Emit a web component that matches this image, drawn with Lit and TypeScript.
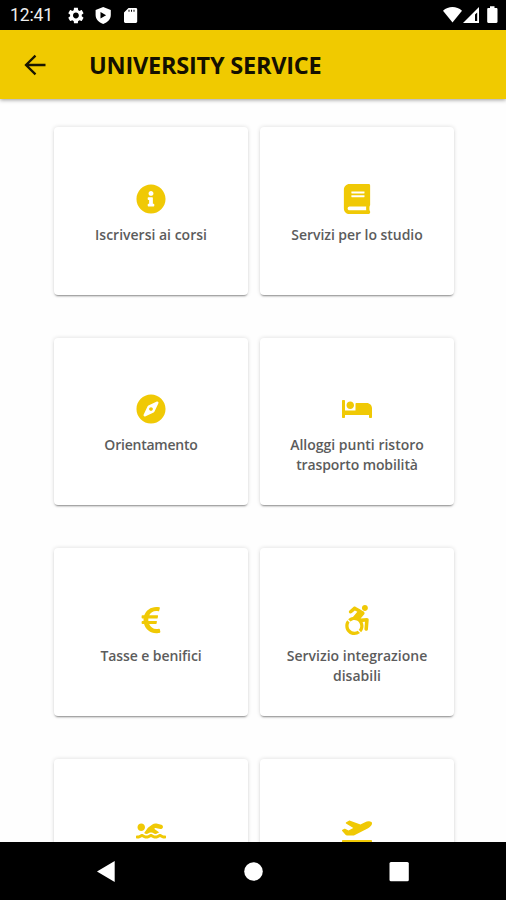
import { LitElement, html, css, svg } from "lit";
import { customElement, property } from "lit/decorators.js";
import { styleMap } from "lit/directives/style-map.js";

interface Service {
  icon: string;
  lines: { text: string; tracking: number }[];
}

const ICONS: Record<string, { width: number; path: string }> = {
  info: {
    width: 512,
    path: "M256 8C119.043 8 8 119.083 8 256c0 136.997 111.043 248 248 248s248-111.003 248-248C504 119.083 392.957 8 256 8zm0 110c23.196 0 42 18.804 42 42s-18.804 42-42 42-42-18.804-42-42 18.804-42 42-42zm56 254c0 6.627-5.373 12-12 12h-88c-6.627 0-12-5.373-12-12v-24c0-6.627 5.373-12 12-12h12v-64h-12c-6.627 0-12-5.373-12-12v-24c0-6.627 5.373-12 12-12h64c6.627 0 12 5.373 12 12v100h12c6.627 0 12 5.373 12 12v24z",
  },
  book: {
    width: 448,
    path: "M448 360V24c0-13.3-10.7-24-24-24H96C43 0 0 43 0 96v320c0 53 43 96 96 96h328c13.3 0 24-10.7 24-24v-16c0-7.5-3.5-14.3-8.9-18.7-4.2-15.4-4.2-59.3 0-74.7 5.4-4.3 8.9-11.1 8.9-18.6zM128 134c0-3.3 2.7-6 6-6h212c3.3 0 6 2.7 6 6v20c0 3.3-2.7 6-6 6H134c-3.3 0-6-2.7-6-6v-20zm0 64c0-3.3 2.7-6 6-6h212c3.3 0 6 2.7 6 6v20c0 3.3-2.7 6-6 6H134c-3.3 0-6-2.7-6-6v-20zm253.4 250H96c-17.7 0-32-14.3-32-32 0-17.6 14.4-32 32-32h285.4c-1.9 17.1-1.9 46.9 0 64z",
  },
  compass: {
    width: 496,
    path: "M225.38 233.37c-12.5 12.5-12.5 32.76 0 45.25 12.49 12.5 32.76 12.5 45.25 0 12.5-12.5 12.5-32.76 0-45.25-12.5-12.49-32.76-12.49-45.25 0zM248 8C111.03 8 0 119.03 0 256s111.03 248 248 248 248-111.03 248-248S384.97 8 248 8zm126.14 148.05L308.17 300.4a31.938 31.938 0 0 1-15.77 15.77l-144.34 65.97c-16.65 7.61-33.81-9.55-26.2-26.2l65.98-144.35a31.938 31.938 0 0 1 15.77-15.77l144.34-65.97c16.65-7.6 33.8 9.55 26.19 26.2z",
  },
  bed: {
    width: 640,
    path: "M176 256c44.11 0 80-35.89 80-80s-35.89-80-80-80-80 35.89-80 80 35.89 80 80 80zm352-128H304c-8.84 0-16 7.16-16 16v144H64V80c0-8.84-7.16-16-16-16H16C7.16 64 0 71.16 0 80v352c0 8.84 7.16 16 16 16h32c8.84 0 16-7.16 16-16v-48h512v48c0 8.84 7.16 16 16 16h32c8.84 0 16-7.16 16-16V240c0-61.86-50.14-112-112-112z",
  },
  euro: {
    width: 320,
    path: "M310.706 413.765c-1.314-6.63-7.835-10.872-14.424-9.369-10.692 2.439-27.422 5.413-45.426 5.413-56.763 0-101.929-34.79-121.461-85.449h113.689a12 12 0 0 0 11.708-9.369l6.373-28.36c1.686-7.502-4.019-14.631-11.708-14.631H115.22c-1.21-14.328-1.414-28.287.137-42.245H261.95a12 12 0 0 0 11.723-9.434l6.512-29.755c1.638-7.484-4.061-14.566-11.723-14.566H130.184c20.633-44.991 62.69-75.03 117.619-75.03 14.486 0 28.564 2.25 37.851 4.145 6.216 1.268 12.347-2.498 14.002-8.623l11.991-44.368c1.822-6.741-2.465-13.616-9.326-14.917C290.217 34.912 270.71 32 249.635 32 152.451 32 74.03 92.252 45.075 176H12c-6.627 0-12 5.373-12 12v29.755c0 6.627 5.373 12 12 12h21.569c-1.009 13.607-1.181 29.287-.181 42.245H12c-6.627 0-12 5.373-12 12v28.36c0 6.627 5.373 12 12 12h30.114C67.139 414.692 145.264 480 249.635 480c26.301 0 48.562-4.544 61.101-7.788 6.167-1.595 10.027-7.708 8.788-13.957l-8.818-44.49z",
  },
  wheelchair: {
    width: 448,
    path: "M423.9 255.8L411 413.1c-3.3 40.7-63.9 35.1-60.6-4.9l10-122.5-41.1 2.3c10.1 20.7 15.8 43.9 15.8 68.5 0 41.2-16.1 78.7-42.3 106.5l-39.3-39.3c57.9-63.7 13.1-167.2-74-167.2-25.9 0-49.5 9.9-67.2 26L73 243.2c22-20.7 50.1-35.1 81.4-40.2l75.3-85.7-42.6-24.8-51.6 46c-30 26.8-70.6-18.5-40.5-45.4l68-60.7c9.8-8.8 24.1-10.2 35.5-3.6 0 0 139.3 80.9 139.5 81.1 16.2 10.1 20.7 36 6.1 52.6L285.7 229l106.1-5.9c18.5-1.1 33.6 14.4 32.1 32.7zm-64.9-154c28.1 0 50.9-22.8 50.9-50.9C409.9 22.8 387.1 0 359 0c-28.1 0-50.9 22.8-50.9 50.9 0 28.1 22.8 50.9 50.9 50.9zM179.6 456.5c-80.6 0-127.4-90.6-82.7-156.1l-39.7-39.7C36.4 287 24 320.3 24 356.4c0 130.7 150.7 201.4 251.4 122.5l-39.7-39.7c-16 10.9-35.3 17.3-56.1 17.3z",
  },
  swimmer: {
    width: 640,
    path: "M189.61 310.58c3.54 3.26 15.27 9.42 34.39 9.42s30.86-6.16 34.39-9.42c16.02-14.77 34.5-22.58 53.46-22.58h16.3c18.96 0 37.45 7.81 53.46 22.58 3.54 3.26 15.27 9.42 34.39 9.42s30.86-6.16 34.39-9.42c14.86-13.71 31.88-21.12 49.39-22.16l-112.84-80.6 18-12.86c3.64-2.58 8.28-3.52 12.62-2.61l100.35 21.53c25.91 5.53 51.44-10.97 57-36.88 5.55-25.92-10.95-51.44-36.88-57L437.68 98.47c-30.73-6.58-63.02.12-88.56 18.38l-80.02 57.17c-10.38 7.39-19.36 16.44-26.72 26.94L173.75 299c5.47 3.23 10.82 6.93 15.86 11.58zM624 352h-16c-26.04 0-45.8-8.42-56.09-17.9-8.9-8.21-19.66-14.1-31.77-14.1h-16.3c-12.11 0-22.87 5.89-31.77 14.1C461.8 343.58 442.04 352 416 352s-45.8-8.42-56.09-17.9c-8.9-8.21-19.66-14.1-31.77-14.1h-16.3c-12.11 0-22.87 5.89-31.77 14.1C269.8 343.58 250.04 352 224 352s-45.8-8.42-56.09-17.9c-8.9-8.21-19.66-14.1-31.77-14.1h-16.3c-12.11 0-22.87 5.89-31.77 14.1C77.8 343.58 58.04 352 32 352H16c-8.84 0-16 7.16-16 16v32c0 8.84 7.16 16 16 16h16c38.62 0 72.72-12.19 96-31.84 23.28 19.66 57.38 31.84 96 31.84s72.72-12.19 96-31.84c23.28 19.66 57.38 31.84 96 31.84s72.72-12.19 96-31.84c23.28 19.66 57.38 31.84 96 31.84h16c8.84 0 16-7.16 16-16v-32c0-8.84-7.16-16-16-16zm-512-96c44.18 0 80-35.82 80-80s-35.82-80-80-80-80 35.82-80 80 35.82 80 80 80z",
  },
  plane: {
    width: 640,
    path: "M624 448H16c-8.84 0-16 7.16-16 16v32c0 8.84 7.16 16 16 16h608c8.84 0 16-7.16 16-16v-32c0-8.84-7.16-16-16-16zM80.55 341.27c6.28 6.84 15.1 10.72 24.33 10.71l130.54-.18a65.62 65.62 0 0 0 29.64-7.12l290.96-147.65c26.74-13.57 50.71-32.94 67.02-58.31 18.31-28.48 20.3-49.09 13.07-63.65-7.21-14.57-24.74-25.27-58.25-27.45-29.85-1.94-59.54 5.92-86.28 19.48l-98.51 49.99-218.7-82.06a17.799 17.799 0 0 0-18-1.11L90.62 67.29c-10.67 5.41-13.25 19.65-5.17 28.53l156.22 98.1-103.21 52.38-72.35-36.47a17.804 17.804 0 0 0-16.07.02L9.91 230.22c-10.44 5.3-13.19 19.12-5.57 28.08l76.21 82.97z",
  },
};

const SERVICES: Service[] = [
  { icon: "info", lines: [{ text: "Iscriversi ai corsi", tracking: 0 }] },
  { icon: "book", lines: [{ text: "Servizi per lo studio", tracking: -0.05 }] },
  { icon: "compass", lines: [{ text: "Orientamento", tracking: -0.22 }] },
  {
    icon: "bed",
    lines: [
      { text: "Alloggi punti ristoro", tracking: 0 },
      { text: "trasporto mobilità", tracking: -0.1 },
    ],
  },
  { icon: "euro", lines: [{ text: "Tasse e benifici", tracking: -0.08 }] },
  {
    icon: "wheelchair",
    lines: [
      { text: "Servizio integrazione", tracking: 0 },
      { text: "disabili", tracking: 0 },
    ],
  },
  { icon: "swimmer", lines: [] },
  { icon: "plane", lines: [] },
];

@customElement("service-card")
export class ServiceCard extends LitElement {
  @property({ attribute: false }) service!: Service;

  static styles = css`
    :host {
      display: flex;
      flex-direction: column;
      align-items: center;
      box-sizing: border-box;
      padding-top: 56.5px;
      border-radius: 4px;
      background: #fff;
      box-shadow: 0 2px 2px -1px rgba(0, 0, 0, 0.42), 0 0 4px rgba(0, 0, 0, 0.14);
    }
    .icon {
      width: 30px;
      height: 30px;
      fill: #f0c905;
    }
    .label {
      margin-top: 11px;
      font: 600 14px/20px "Open Sans", sans-serif;
      color: #5c5c5c;
      text-align: center;
      white-space: nowrap;
    }
    .line {
      display: block;
    }
  `;

  render() {
    const icon = ICONS[this.service.icon];
    return html`
      <svg class="icon" viewBox="0 0 ${icon.width} 512">${svg`<path d=${icon.path} />`}</svg>
      <div class="label">
        ${this.service.lines.map(
          (l) => html`<span class="line" style=${styleMap({ letterSpacing: `${l.tracking}px` })}>${l.text}</span>`
        )}
      </div>
    `;
  }
}

@customElement("app-root")
export class AppRoot extends LitElement {
  static styles = css`
    :host {
      display: flex;
      flex-direction: column;
      height: 900px;
      overflow: hidden;
      background: #fefefe;
    }
    .status {
      flex: none;
      display: flex;
      align-items: center;
      height: 30px;
      background: #000;
      color: #fff;
    }
    .clock {
      width: 66px;
      padding-left: 10px;
      box-sizing: border-box;
      font: 400 17.5px/32px Roboto, sans-serif;
      letter-spacing: -0.1px;
      color: #eee;
    }
    .status-icons {
      display: block;
      fill: #fff;
    }
    .spacer {
      flex: 1;
    }
    .bar {
      flex: none;
      display: flex;
      align-items: center;
      height: 69px;
      background: #f0ca00;
      box-shadow: 0 1px 4px rgba(0, 0, 0, 0.4);
      z-index: 1;
    }
    .back {
      width: 22px;
      height: 22px;
      margin-left: 24px;
      fill: none;
      stroke: #1a1600;
      stroke-width: 2.3;
    }
    .title {
      margin: 0 0 0 43px;
      font: 700 23.5px/32px "Open Sans", sans-serif;
      letter-spacing: -0.22px;
      color: #141000;
      white-space: nowrap;
    }
    .content {
      flex: 1;
      min-height: 0;
      overflow: hidden;
      display: grid;
      grid-template-columns: 194px 194px;
      grid-auto-rows: 167.5px;
      justify-content: center;
      gap: 43.2px 12px;
      padding: 28px 0 0 2px;
      box-sizing: border-box;
    }
    .nav {
      flex: none;
      display: flex;
      align-items: center;
      height: 58.5px;
      background: #000;
    }
    .nav svg {
      display: block;
      fill: #fff;
    }
  `;

  render() {
    return html`
      <div class="status">
        <span class="clock">12:41</span>
        <svg class="status-icons" width="74" height="30" viewBox="66 0 74 30">
          <g transform="translate(66.2 5.8) scale(.81)">
            <path
              d="M19.14 12.94c.04-.3.06-.61.06-.94 0-.32-.02-.64-.07-.94l2.03-1.58c.18-.14.23-.41.12-.61l-1.92-3.32c-.12-.22-.37-.29-.59-.22l-2.39.96c-.5-.38-1.03-.7-1.62-.94L14.4 2.81c-.04-.24-.24-.41-.48-.41h-3.84c-.24 0-.43.17-.47.41l-.36 2.54c-.59.24-1.13.57-1.62.94l-2.39-.96c-.22-.08-.47 0-.59.22L2.74 8.87c-.12.21-.08.47.12.61l2.03 1.58c-.05.3-.09.63-.09.94s.02.64.07.94l-2.03 1.58c-.18.14-.23.41-.12.61l1.92 3.32c.12.22.37.29.59.22l2.39-.96c.5.38 1.03.7 1.62.94l.36 2.54c.05.24.24.41.48.41h3.84c.24 0 .44-.17.47-.41l.36-2.54c.59-.24 1.13-.56 1.62-.94l2.39.96c.22.08.47 0 .59-.22l1.92-3.32c.12-.22.07-.47-.12-.61l-2.01-1.58zM12 15.6c-1.98 0-3.6-1.62-3.6-3.6s1.62-3.6 3.6-3.6 3.6 1.62 3.6 3.6-1.62 3.6-3.6 3.6z"
            />
          </g>
          <path
            fill-rule="evenodd"
            d="M103.2 7l7.6 2.9v5.2c0 4.2-3.1 7.4-7.6 9-4.5-1.6-7.6-4.8-7.6-9V9.900zM100.500 12v6.400l5.600-3.200z"
          />
          <path
            fill-rule="evenodd"
            d="M128.500 8h7.300c.8 0 1.400.6 1.400 1.400v12.200c0 .8-.6 1.400-1.400 1.400h-10.400c-.8 0-1.400-.6-1.400-1.400V12.500zM128.500 9.800v2h1v-2zM131 9.800v2h1v-2zM133.500 9.800v2h1v-2z"
          />
        </svg>
        <span class="spacer"></span>
        <svg class="status-icons" width="66" height="30" viewBox="440 0 66 30">
          <path d="M452.500 22.500L443 10.700c2.700-2.400 6-3.700 9.500-3.700s6.800 1.300 9.500 3.700z" />
          <path fill-rule="evenodd" d="M479 7v16h-16zM477.200 12.500l-2.200 2v6.500h2.200z" />
          <path d="M490 6.300h4.500v1.700h1.800c.7 0 1.200.5 1.200 1.200v12.600c0 .7-.5 1.200-1.200 1.200h-7.900c-.7 0-1.200-.5-1.200-1.200V9.200c0-.7.500-1.200 1.200-1.200H490z" />
        </svg>
      </div>
      <header class="bar">
        <svg class="back" viewBox="0 0 22 22"><path d="M21.500 11H2.200M11.500 1.600L2 11l9.500 9.400" /></svg>
        <h1 class="title">UNIVERSITY SERVICE</h1>
      </header>
      <main class="content">
        ${SERVICES.map((s) => html`<service-card .service=${s}></service-card>`)}
      </main>
      <nav class="nav">
        <svg width="506" height="58" viewBox="0 0 506 58">
          <path d="M97 29.500L114.700 19v21z" />
          <circle cx="253.500" cy="29.500" r="9.300" />
          <rect x="389.500" y="20" width="19.300" height="19.300" rx="1.500" />
        </svg>
      </nav>
    `;
  }
}
